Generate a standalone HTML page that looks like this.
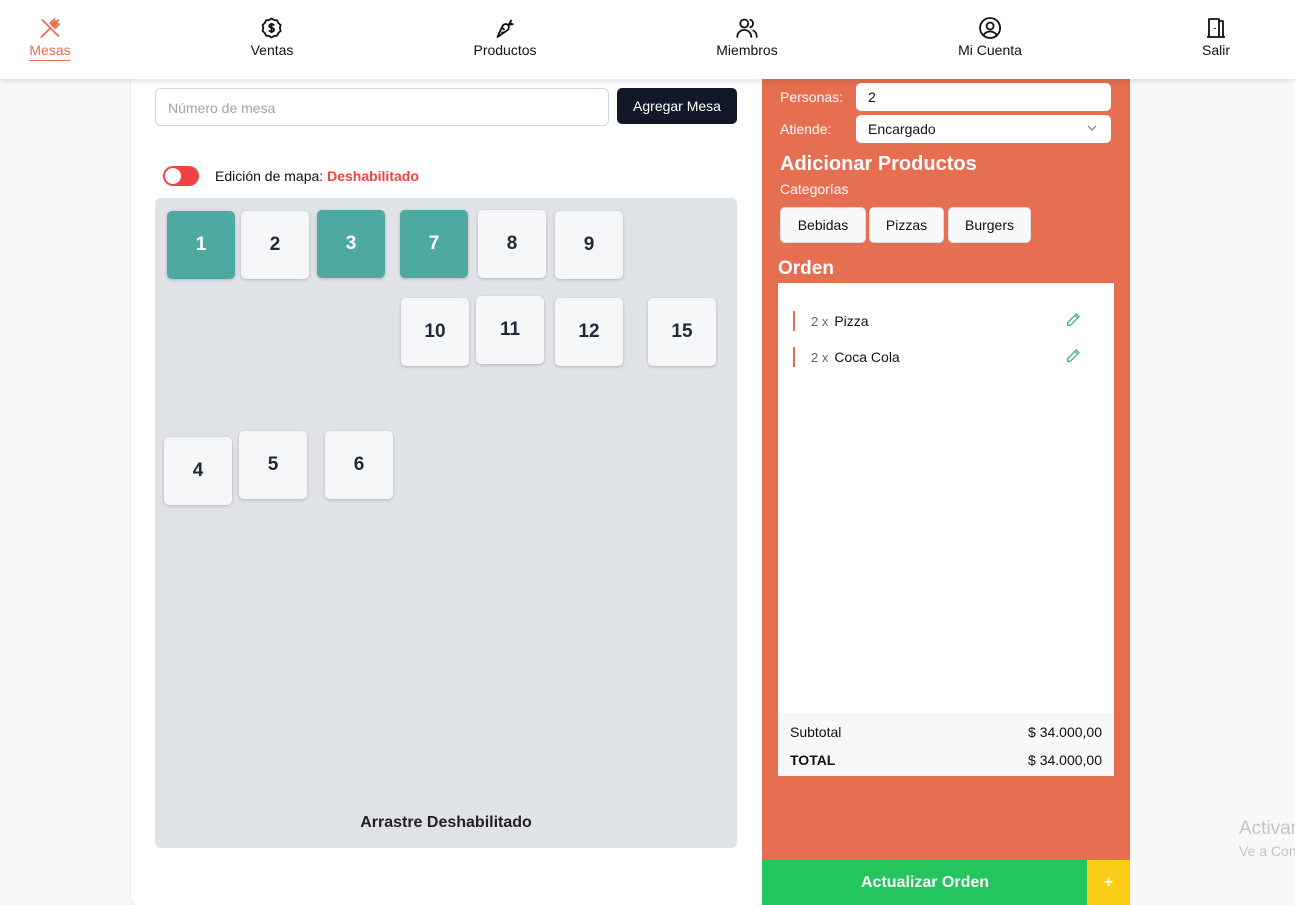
<!DOCTYPE html>
<html><head><meta charset="utf-8"><style>
*{box-sizing:border-box;margin:0;padding:0}
body{width:1295px;height:905px;overflow:hidden;background:#f9f9f9;font-family:"Liberation Sans",sans-serif;position:relative}
.nav{position:absolute;left:0;top:0;width:1295px;height:79px;background:#fff;box-shadow:0 2px 6px rgba(0,0,0,.12);z-index:5}
.ni{position:absolute;top:16px;text-align:center;font-size:14px;color:#111;transform:translateX(-50%);white-space:nowrap}
.ni svg{display:block;margin:0 auto 2px;width:24px;height:24px}
.main{position:absolute;left:131px;top:79px;width:632px;height:826px;background:#fff;border-radius:0 0 8px 8px;box-shadow:0 0 3px rgba(0,0,0,.1)}
.inp{position:absolute;left:155px;top:88px;width:454px;height:38px;border:1px solid #d1d5db;border-radius:6px;font-size:14px;color:#9ca3af;padding:11px 12px}
.btn{position:absolute;left:617px;top:88px;width:120px;height:36px;background:#111827;border-radius:5px;color:#fff;font-size:14px;text-align:center;line-height:36px}
.tog{position:absolute;left:163px;top:166px;width:36px;height:20px;border-radius:10px;background:#ef4444}
.tog:after{content:"";position:absolute;left:2px;top:2px;width:16px;height:16px;border-radius:50%;background:#fff}
.map{position:absolute;left:155px;top:198px;width:582px;height:650px;background:#dfe2e7;border-radius:6px}
.t{position:absolute;width:68px;height:68px;border-radius:5px;background:#f4f6f8;box-shadow:0 1px 3px rgba(0,0,0,.2);font-weight:bold;font-size:19px;color:#1f2937;text-align:center;line-height:68px}
.t.g{background:#4ea9a0;color:#fff}
.panel{position:absolute;left:762px;top:79px;width:368px;height:781px;background:#e76f51}
.lbl{position:absolute;color:#fff;font-size:14px}
.fld{position:absolute;left:856px;width:255px;height:28px;background:#fff;border-radius:5px;font-size:14px;padding:6px 12px;color:#111}
.cat{position:absolute;top:207px;height:36px;background:#f8f9fa;border:1px solid #ddd;border-radius:5px;font-size:14px;text-align:center;line-height:34px;color:#111}
.ord{position:absolute;left:778px;top:283px;width:336px;height:493px;background:#fff}
.it{position:absolute;left:15px;height:20px;border-left:2px solid #e76f51;font-size:14px;color:#111;padding-left:16px;line-height:20px;width:300px}
.it span{color:#666;font-size:13px;margin-right:6px}
.it svg{position:absolute;right:12px;top:1px}
.tot{position:absolute;left:0;top:430px;width:336px;height:63px;background:#f8f8f8;font-size:14px;color:#111}
</style></head><body>
<div class="nav">
<div class="ni" style="left:50px;color:#e76f51"><svg viewBox="0 0 24 24" fill="none" stroke="#e76f51" stroke-width="1.8" stroke-linecap="round"><path d="M4 4l16 16M3 21l8-8M14 10l6-6M16 3l-4 4 5 5 4-4M17 5l-3 3M19 7l-3 3"/></svg><span style="border-bottom:1px solid #e76f51;padding-bottom:2px">Mesas</span></div>
<div class="ni" style="left:272px"><svg viewBox="0 0 24 24" fill="none" stroke="#111" stroke-width="1.8"><path d="M12 2.5l2.5 1.5 3 .3 1.2 2.7 2.3 2-.7 3 .7 3-2.3 2-1.2 2.7-3 .3L12 21.5l-2.5-1.5-3-.3-1.2-2.7L3 15l.7-3L3 9l2.3-2 1.2-2.7 3-.3z"/><path d="M14.5 9.5c-.5-1-1.5-1.3-2.5-1.3-1.4 0-2.4.8-2.4 1.8 0 2.4 5 1.3 5 3.8 0 1.1-1.1 1.8-2.6 1.8-1.1 0-2-.4-2.5-1.3M12 7v10"/></svg>Ventas</div>
<div class="ni" style="left:505px"><svg viewBox="0 0 24 24" fill="none" stroke="#111" stroke-width="1.8" stroke-linejoin="round"><path d="M4 21l5-11c1-2 4-2.5 5.5-1s1 4.5-1 5.5zM9 12l2 2M8 16l2 1M15 9l3-5M15 9l5-1M16 6.5l2.5 1.5"/></svg>Productos</div>
<div class="ni" style="left:747px"><svg viewBox="0 0 24 24" fill="none" stroke="#111" stroke-width="1.8" stroke-linecap="round"><circle cx="9" cy="7.5" r="4"/><path d="M2 21c0-4 3-7 7-7s7 3 7 7M15 3.7a4 4 0 010 7.6M18 14.5c2 1 3.5 3.5 3.5 6.5"/></svg>Miembros</div>
<div class="ni" style="left:990px"><svg viewBox="0 0 24 24" fill="none" stroke="#111" stroke-width="1.8"><circle cx="12" cy="12" r="10"/><circle cx="12" cy="10" r="3.5"/><path d="M5.5 19c1.5-2.5 3.8-3.5 6.5-3.5s5 1 6.5 3.5"/></svg>Mi Cuenta</div>
<div class="ni" style="left:1216px"><svg viewBox="0 0 24 24" fill="none" stroke="#111" stroke-width="1.8" stroke-linejoin="round"><path d="M3 21h18M5 21V3h10v18M15 5h4v16M11 12v1"/></svg>Salir</div>
</div>
<div class="main"></div>
<div class="inp">Número de mesa</div>
<div class="btn">Agregar Mesa</div>
<div class="tog"></div>
<div style="position:absolute;left:215px;top:168px;font-size:14px;color:#111">Edición de mapa: <b style="color:#ef4444">Deshabilitado</b></div>
<div class="map"></div>
<div class="t g" style="left:167px;top:211px">1</div>
<div class="t" style="left:241px;top:211px">2</div>
<div class="t g" style="left:317px;top:210px">3</div>
<div class="t g" style="left:400px;top:210px">7</div>
<div class="t" style="left:478px;top:210px">8</div>
<div class="t" style="left:555px;top:211px">9</div>
<div class="t" style="left:401px;top:298px">10</div>
<div class="t" style="left:476px;top:296px">11</div>
<div class="t" style="left:555px;top:298px">12</div>
<div class="t" style="left:648px;top:298px">15</div>
<div class="t" style="left:164px;top:437px">4</div>
<div class="t" style="left:239px;top:431px">5</div>
<div class="t" style="left:325px;top:431px">6</div>
<div style="position:absolute;left:155px;width:582px;top:814px;text-align:center;font-weight:bold;font-size:16px;color:#222">Arrastre Deshabilitado</div>
<div class="panel"></div>
<div class="lbl" style="left:780px;top:89px">Personas:</div>
<div class="fld" style="top:83px">2</div>
<div class="lbl" style="left:780px;top:121px">Atiende:</div>
<div class="fld" style="top:115px">Encargado<svg style="position:absolute;right:14px;top:10px" width="10" height="7" viewBox="0 0 10 7"><path d="M1 1l4 4 4-4" fill="none" stroke="#888" stroke-width="1.3"/></svg></div>
<div class="lbl" style="left:780px;top:153px;font-size:20px;font-weight:bold">Adicionar Productos</div>
<div class="lbl" style="left:780px;top:181px">Categorías</div>
<div class="cat" style="left:780px;width:86px">Bebidas</div>
<div class="cat" style="left:869px;width:75px">Pizzas</div>
<div class="cat" style="left:948px;width:83px">Burgers</div>
<div class="lbl" style="left:778px;top:258px;font-size:19px;font-weight:bold">Orden</div>
<div class="ord">
<div class="it" style="top:28px"><span>2 x</span>Pizza<svg width="16" height="16" viewBox="0 0 24 24" fill="none" stroke="#4ea9a0" stroke-width="2"><path d="M17 3l4 4L8 20H4v-4zM15 5l4 4"/></svg></div>
<div class="it" style="top:64px"><span>2 x</span>Coca Cola<svg width="16" height="16" viewBox="0 0 24 24" fill="none" stroke="#4ea9a0" stroke-width="2"><path d="M17 3l4 4L8 20H4v-4zM15 5l4 4"/></svg></div>
<div class="tot">
<div style="position:absolute;left:12px;top:11px">Subtotal</div><div style="position:absolute;right:12px;top:11px">$ 34.000,00</div>
<div style="position:absolute;left:12px;top:39px;font-weight:900">TOTAL</div><div style="position:absolute;right:12px;top:39px">$ 34.000,00</div>
</div></div>
<div style="position:absolute;left:762px;top:860px;width:326px;height:45px;background:#22c55e;color:#fff;font-weight:bold;font-size:16px;text-align:center;line-height:45px">Actualizar Orden</div>
<div style="position:absolute;left:1087px;top:860px;width:43px;height:45px;background:#facc15;color:#fff;font-weight:bold;font-size:16px;text-align:center;line-height:45px">+</div>
<div style="position:absolute;left:1239px;top:818px;font-size:19px;color:#c4c4c4;white-space:nowrap">Activar</div>
<div style="position:absolute;left:1239px;top:843px;font-size:14px;color:#c4c4c4;white-space:nowrap">Ve a Con</div>
</body></html>
